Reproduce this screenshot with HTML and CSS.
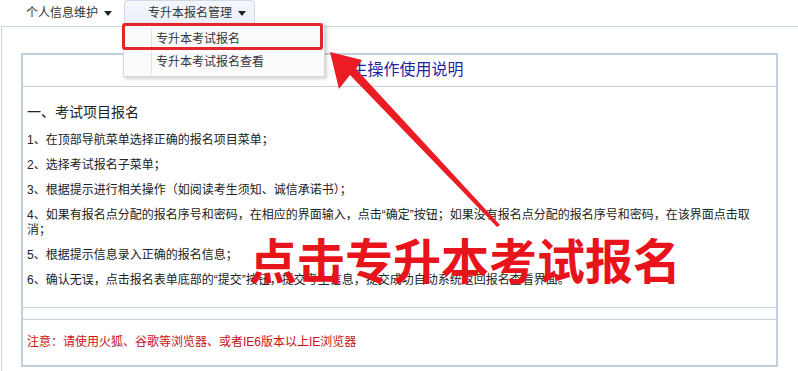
FILE: index.html
```html
<!DOCTYPE html>
<html lang="zh-CN">
<head>
<meta charset="utf-8">
<title>专升本报名管理</title>
<link rel="stylesheet" href="styles.css">
</head>
<body>
<div class="nav">
  <div class="nav-item">个人信息维护<span class="caret"></span></div>
  <div class="nav-item tab">专升本报名管理<span class="caret"></span>
    <div class="dropdown">
      <div class="dd-item"><span class="dd-icon"></span><span class="dd-text">专升本考试报名</span></div>
      <div class="dd-item"><span class="dd-icon"></span><span class="dd-text">专升本考试报名查看</span></div>
    </div>
    <div class="highlight"></div>
  </div>
</div>
<div class="frame">
  <div class="panel">
    <div class="panel-title">考生操作使用说明</div>
    <div class="panel-body">
      <h3 class="heading">一、考试项目报名</h3>
      <p class="step">1、在顶部导航菜单选择正确的报名项目菜单；</p>
      <p class="step">2、选择考试报名子菜单；</p>
      <p class="step">3、根据提示进行相关操作（如阅读考生须知、诚信承诺书）；</p>
      <p class="step">4、如果有报名点分配的报名序号和密码，在相应的界面输入，点击“确定”按钮；如果没有报名点分配的报名序号和密码，在该界面点击取消；</p>
      <p class="step">5、根据提示信息录入正确的报名信息；</p>
      <p class="step">6、确认无误，点击报名表单底部的“提交”按钮，提交考生信息，提交成功自动系统返回报名查看界面。</p>
    </div>
    <div class="panel-band"></div>
    <div class="panel-note">注意：请使用火狐、谷歌等浏览器、或者IE6版本以上IE浏览器</div>
  </div>
</div>
<svg class="arrow" width="798" height="371" viewBox="0 0 798 371">
  <polygon points="330,52 362,60 356,69 500,225 497,227 350,75 339,89" fill="#ec1c24"/>
</svg>
<div class="callout">点击专升本考试报名</div>
</body>
</html>
```

FILE: styles.css
```css
html, body {
  margin: 0;
  padding: 0;
  background: #ffffff;
}

body {
  width: 798px;
  height: 371px;
  overflow: hidden;
  position: relative;
  font-family: "Liberation Sans", "Noto Sans CJK SC", sans-serif;
  font-size: 12px;
  color: #333333;
}

.nav {
  display: flex;
  align-items: flex-start;
  height: 26px;
  padding-left: 26px;
}

.nav-item {
  display: flex;
  align-items: center;
  height: 26px;
  line-height: 26px;
  color: #333333;
  position: relative;
}

.caret {
  display: inline-block;
  width: 0;
  height: 0;
  border-left: 4px solid transparent;
  border-right: 4px solid transparent;
  border-top: 5px solid #222222;
  margin-left: 6px;
}

.tab {
  margin-left: 12px;
  padding: 0 8px 0 23px;
  height: 25px;
  box-sizing: border-box;
  border: 1px solid #cfdae7;
  border-bottom: none;
  border-radius: 4px 4px 0 0;
  background: linear-gradient(#f4f7fc, #e9eff8);
  z-index: 3;
}

.dropdown {
  position: absolute;
  left: -2px;
  top: 22px;
  width: 200px;
  padding: 4px 0 2px;
  background: #fbfbfb;
  border: 1px solid #d6d9de;
  box-shadow: 2px 2px 3px rgba(0, 0, 0, 0.18);
  z-index: 4;
}

.dd-item {
  display: flex;
  height: 23px;
  line-height: 23px;
  color: #333333;
}

.dd-icon {
  width: 27px;
  border-right: 1px solid #e2e2e2;
}

.dd-text {
  padding-left: 4px;
}

.highlight {
  position: absolute;
  left: -3px;
  top: 22px;
  width: 195px;
  height: 21px;
  border: 3px solid #e3262b;
  border-radius: 3px;
  z-index: 5;
}

.frame {
  margin-left: 1px;
  border-top: 1px solid #c9d6e3;
  border-left: 1px solid #c9d6e3;
  padding: 26px 0 0 19px;
  height: 345px;
  box-sizing: border-box;
}

.panel {
  width: 757px;
  box-sizing: border-box;
  border: 2px solid #c3d0dc;
  background: #ffffff;
}

.panel-title {
  height: 32px;
  box-sizing: border-box;
  line-height: 30px;
  border-bottom: 1px solid #c3d0dc;
  text-align: center;
  font-size: 16px;
  color: #1f1fa0;
}

.panel-body {
  height: 221px;
  box-sizing: border-box;
  padding: 15px 21px 0 4px;
  border-bottom: 1px solid #c3d0dc;
}

.heading {
  margin: 0 0 11px;
  font-size: 14px;
  font-weight: normal;
  line-height: 20px;
  color: #222222;
}

.step {
  margin: 0 0 10px;
  line-height: 15px;
  color: #222222;
}

.panel-band {
  height: 12px;
  box-sizing: border-box;
  border-bottom: 1px solid #c3d0dc;
  background: #fbfdfe;
}

.panel-note {
  height: 45px;
  box-sizing: border-box;
  padding: 15px 0 0 4px;
  line-height: 15px;
  color: #cc1016;
}

.arrow {
  position: absolute;
  left: 0;
  top: 0;
  pointer-events: none;
  z-index: 6;
}

.callout {
  position: absolute;
  left: 249px;
  top: 234px;
  font-family: "Noto Sans CJK SC", sans-serif;
  font-size: 48px;
  font-weight: bold;
  line-height: 48px;
  color: #e8141b;
  white-space: nowrap;
  z-index: 7;
}
```
